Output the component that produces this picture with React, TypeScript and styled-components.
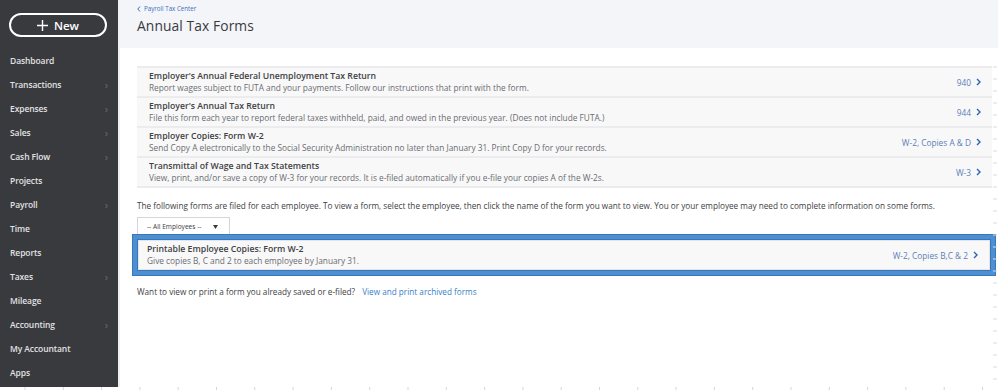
import styled, { createGlobalStyle } from "styled-components";

const GlobalStyle = createGlobalStyle`
	html, body {
		margin: 0;
		padding: 0;
		background: #ffffff;
		font-family: "Open Sans", Lato, sans-serif;
	}
	* {
		box-sizing: border-box;
	}
`;

const Page = styled.div`
	position: relative;
	width: 998px;
	height: 391px;
	overflow: hidden;
	background: #ffffff;
`;

const Layout = styled.div`
	display: flex;
	height: 387px;
`;

const Sidebar = styled.nav`
	width: 118px;
	flex-shrink: 0;
	background: #393a3d;
	display: flex;
	flex-direction: column;
	padding-top: 13px;
`;

const NewButton = styled.button`
	margin: 0 11px 11px 9px;
	height: 24px;
	border: 2px solid #ffffff;
	border-radius: 12px;
	background: transparent;
	color: #ffffff;
	font-family: "Open Sans", sans-serif;
	font-weight: 600;
	font-size: 11.5px;
	display: flex;
	align-items: center;
	justify-content: center;
	gap: 6px;
	padding: 0;
`;

const NavItem = styled.div`
	height: 24px;
	padding: 0 10px;
	display: flex;
	align-items: center;
	justify-content: space-between;
	color: #e1e2e4;
	font-size: 8.5px;
	font-weight: 600;
	letter-spacing: -0.1px;
`;

const NavChevron = styled.span`
	color: #6d6e71;
	font-size: 11px;
	font-weight: 400;
`;

const Main = styled.main`
	flex: 1;
	border-left: 2px solid #f0f0f1;
	display: flex;
	flex-direction: column;
`;

const Header = styled.header`
	height: 48px;
	background: #f4f5f8;
	padding: 3px 0 0 17px;
`;

const Breadcrumb = styled.a`
	display: flex;
	align-items: center;
	gap: 3px;
	color: #3b6fc0;
	font-size: 6.2px;
	height: 11px;
`;

const Title = styled.h1`
	margin: 2px 0 0;
	font-size: 13.8px;
	font-weight: 400;
	color: #393a3d;
	letter-spacing: 0.1px;
`;

const Content = styled.section`
	padding: 18px 6px 0 17px;
	display: flex;
	flex-direction: column;
`;

const FormList = styled.div`
	display: flex;
	flex-direction: column;
	border-top: 2px solid #ececee;
`;

const Row = styled.div`
	height: 30px;
	background: #f8f8f8;
	border-bottom: 2px solid #ececee;
	display: flex;
	align-items: center;
	justify-content: space-between;
	padding: 0 11px 0 12px;
`;

const RowText = styled.div`
	display: flex;
	flex-direction: column;
`;

const RowTitle = styled.div`
	font-size: 8.7px;
	font-weight: 600;
	color: #404144;
	line-height: 11px;
`;

const RowDesc = styled.div`
	font-size: 8.3px;
	color: #6b6c72;
	line-height: 11px;
`;

const FormLink = styled.a`
	display: flex;
	align-items: center;
	gap: 5px;
	font-size: 8.3px;
	color: #5a80b8;
`;

const Info = styled.p`
	margin: 12px 0 0;
	font-size: 8.2px;
	color: #404144;
`;

const Select = styled.div`
	margin-top: 6px;
	width: 93px;
	height: 18px;
	border: 1px solid #d4d5d8;
	border-bottom: none;
	display: flex;
	align-items: center;
	padding-left: 9px;
	gap: 12px;
	font-size: 6.6px;
	color: #393a3d;
`;

const Highlight = styled.div`
	margin: 0 -3px 0 -4px;
	border: 4px solid #4c8fd3;
	box-shadow: inset 0 0 0 1px #3a77b8, 0 0 0 1px #3a77b8;
	background: #ffffff;
	display: flex;
	flex-direction: column;
`;

const HighlightRow = styled(Row)`
	border: 1px solid #e4e4e6;
	height: 30px;
	margin: 1px;
	padding-left: 8px;
`;

const Footer = styled.p`
	margin: 11px 0 0;
	font-size: 8.2px;
	color: #404144;
	display: flex;
	gap: 7px;
`;

const TextLink = styled.a`
	color: #3a7fc8;
`;

const Ruler = styled.svg`
	display: block;
`;

const SideRuler = styled.svg`
	position: absolute;
	right: 0;
	top: 60px;
`;

const navItems: [string, boolean][] = [
	["Dashboard", false],
	["Transactions", true],
	["Expenses", true],
	["Sales", true],
	["Cash Flow", true],
	["Projects", false],
	["Payroll", true],
	["Time", false],
	["Reports", false],
	["Taxes", true],
	["Mileage", false],
	["Accounting", true],
	["My Accountant", false],
	["Apps", false],
];

const forms = [
	{
		title: "Employer's Annual Federal Unemployment Tax Return",
		desc: "Report wages subject to FUTA and your payments. Follow our instructions that print with the form.",
		link: "940",
	},
	{
		title: "Employer's Annual Tax Return",
		desc: "File this form each year to report federal taxes withheld, paid, and owed in the previous year. (Does not include FUTA.)",
		link: "944",
	},
	{
		title: "Employer Copies: Form W-2",
		desc: "Send Copy A electronically to the Social Security Administration no later than January 31. Print Copy D for your records.",
		link: "W-2, Copies A & D",
	},
	{
		title: "Transmittal of Wage and Tax Statements",
		desc: "View, print, and/or save a copy of W-3 for your records. It is e-filed automatically if you e-file your copies A of the W-2s.",
		link: "W-3",
	},
];

function Chevron({ color = "#2d63b9" }: { color?: string }) {
	return (
		<svg width="5" height="8" viewBox="0 0 5 8">
			<path d="M1 1 L4 4 L1 7" fill="none" stroke={color} strokeWidth="1.4" />
		</svg>
	);
}

function App() {
	const bottomTicks = Array.from({ length: 26 }, (_, i) => 25 + i * 38.3);
	const sideTicks = Array.from({ length: 27 }, (_, i) => 7 + i * 12);

	return (
		<Page>
			<GlobalStyle />
			<Layout>
				<Sidebar>
					<NewButton>
						<svg width="11" height="11" viewBox="0 0 11 11">
							<path d="M5.5 0 V11 M0 5.5 H11" stroke="#fff" strokeWidth="1.4" />
						</svg>
						New
					</NewButton>
					{navItems.map(([label, more]) => (
						<NavItem key={label}>
							{label}
							{more && <NavChevron>›</NavChevron>}
						</NavItem>
					))}
				</Sidebar>
				<Main>
					<Header>
						<Breadcrumb>
							<svg width="4" height="6" viewBox="0 0 4 6">
								<path d="M3 0.5 L0.8 3 L3 5.5" fill="none" stroke="#3b6fc0" strokeWidth="1" />
							</svg>
							Payroll Tax Center
						</Breadcrumb>
						<Title>Annual Tax Forms</Title>
					</Header>
					<Content>
						<FormList>
							{forms.map((f) => (
								<Row key={f.title}>
									<RowText>
										<RowTitle>{f.title}</RowTitle>
										<RowDesc>{f.desc}</RowDesc>
									</RowText>
									<FormLink>
										{f.link}
										<Chevron />
									</FormLink>
								</Row>
							))}
						</FormList>
						<Info>
							The following forms are filed for each employee. To view a form, select the employee, then click the name of the form you want to view. You or your employee may need to complete information on some forms.
						</Info>
						<Select>
							-- All Employees --
							<svg width="5" height="4" viewBox="0 0 5 4">
								<path d="M0 0 H5 L2.5 4 Z" fill="#393a3d" />
							</svg>
						</Select>
						<Highlight>
							<HighlightRow>
								<RowText>
									<RowTitle>Printable Employee Copies: Form W-2</RowTitle>
									<RowDesc>Give copies B, C and 2 to each employee by January 31.</RowDesc>
								</RowText>
								<FormLink>
									W-2, Copies B,C &amp; 2
									<Chevron />
								</FormLink>
							</HighlightRow>
						</Highlight>
						<Footer>
							Want to view or print a form you already saved or e-filed?
							<TextLink>View and print archived forms</TextLink>
						</Footer>
					</Content>
				</Main>
			</Layout>
			<Ruler width="998" height="4" viewBox="0 0 998 4">
				{bottomTicks.map((x) => (
					<line key={x} x1={x} y1="0" x2={x} y2="3" stroke="#d6d6d6" strokeWidth="1" />
				))}
			</Ruler>
			<SideRuler width="5" height="330" viewBox="0 0 5 330">
				{sideTicks.map((y) => (
					<line key={y} x1="0" y1={y} x2="4" y2={y} stroke="#dcdcdc" strokeWidth="1" />
				))}
			</SideRuler>
		</Page>
	);
}

export default App;
